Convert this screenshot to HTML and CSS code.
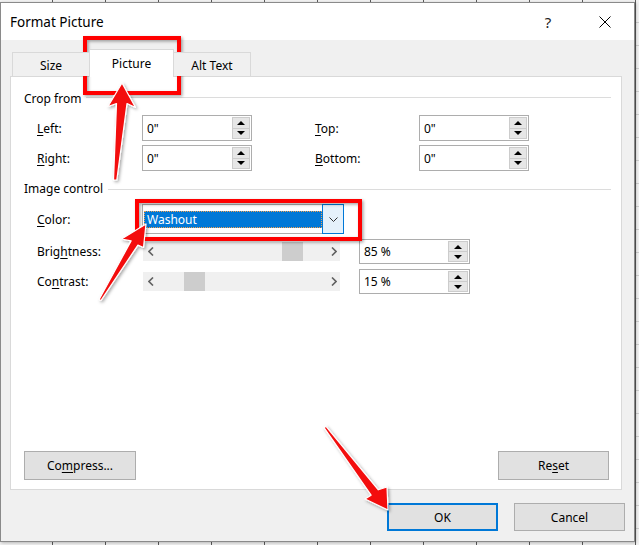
FILE: index.html
```html
<!DOCTYPE html>
<html lang="en">

<head>
    <meta charset="UTF-8">
    <meta name="viewport" content="width=device-width, initial-scale=1.0">
    <title>Format Picture</title>
    <link rel="stylesheet" href="styles.css">
</head>

<body>
    <div class="dialog">
        <div class="titlebar">
            <span class="title">Format Picture</span>
            <span class="help">?</span>
            <span class="close">
                <svg width="12" height="12" viewBox="0 0 12 12"><path d="M0.5 0.5 L11.5 11.5 M11.5 0.5 L0.5 11.5" stroke="#000" stroke-width="1" fill="none" /></svg>
            </span>
        </div>

        <div class="dialog-body">
            <div class="tabs">
                <div class="tab tab-size">Size</div>
                <div class="tab tab-picture active">Picture</div>
                <div class="tab tab-alt">Alt Text</div>
            </div>

            <div class="panel">
                <div class="group-head"><span>Crop from</span></div>
                <div class="crop-grid">
                    <label><u>L</u>eft:</label>
                    <div class="spin-field">
                        <span class="value">0"</span>
                        <span class="spin"><span><i class="up"></i></span><span><i class="down"></i></span></span>
                    </div>
                    <span></span>
                    <label><u>T</u>op:</label>
                    <div class="spin-field">
                        <span class="value">0"</span>
                        <span class="spin"><span><i class="up"></i></span><span><i class="down"></i></span></span>
                    </div>

                    <label><u>R</u>ight:</label>
                    <div class="spin-field">
                        <span class="value">0"</span>
                        <span class="spin"><span><i class="up"></i></span><span><i class="down"></i></span></span>
                    </div>
                    <span></span>
                    <label><u>B</u>ottom:</label>
                    <div class="spin-field">
                        <span class="value">0"</span>
                        <span class="spin"><span><i class="up"></i></span><span><i class="down"></i></span></span>
                    </div>
                </div>

                <div class="group-head image-head"><span>Image control</span></div>
                <div class="ctrl-grid">
                    <label><u>C</u>olor:</label>
                    <div class="combo">
                        <span class="combo-value">Washout</span>
                        <span class="combo-btn">
                            <svg width="9" height="5" viewBox="0 0 9 5"><path d="M0.5 0.5 L4.5 4.5 L8.5 0.5" stroke="#333" stroke-width="1" fill="none" /></svg>
                        </span>
                    </div>

                    <label>Brig<u>h</u>tness:</label>
                    <div class="slider">
                        <svg width="6" height="9" viewBox="0 0 6 9"><path d="M5 0.5 L1 4.5 L5 8.5" stroke="#606060" stroke-width="1.6" fill="none" /></svg>
                        <svg width="6" height="9" viewBox="0 0 6 9"><path d="M1 0.5 L5 4.5 L1 8.5" stroke="#606060" stroke-width="1.6" fill="none" /></svg>
                        <span class="thumb" style="left: 139px"></span>
                    </div>
                    <span></span>
                    <div class="spin-field wide">
                        <span class="value">85 %</span>
                        <span class="spin"><span><i class="up"></i></span><span><i class="down"></i></span></span>
                    </div>

                    <label>Co<u>n</u>trast:</label>
                    <div class="slider">
                        <svg width="6" height="9" viewBox="0 0 6 9"><path d="M5 0.5 L1 4.5 L5 8.5" stroke="#606060" stroke-width="1.6" fill="none" /></svg>
                        <svg width="6" height="9" viewBox="0 0 6 9"><path d="M1 0.5 L5 4.5 L1 8.5" stroke="#606060" stroke-width="1.6" fill="none" /></svg>
                        <span class="thumb" style="left: 41px"></span>
                    </div>
                    <span></span>
                    <div class="spin-field wide">
                        <span class="value">15 %</span>
                        <span class="spin"><span><i class="up"></i></span><span><i class="down"></i></span></span>
                    </div>
                </div>

                <div class="panel-buttons">
                    <button type="button" class="btn-compress">Co<u>m</u>press...</button>
                    <button type="button" class="btn-reset">Re<u>s</u>et</button>
                </div>
            </div>

            <div class="footer">
                <button type="button" class="btn-ok">OK</button>
                <button type="button">Cancel</button>
            </div>
        </div>
    </div>

    <!-- annotation layer drawn over the dialog -->
    <svg class="marks" width="639" height="545" viewBox="0 0 639 545">
        <defs>
            <filter id="shadow" x="-20%" y="-20%" width="140%" height="140%">
                <feDropShadow dx="1.5" dy="1.5" stdDeviation="1.5" flood-color="#000" flood-opacity="0.35" />
            </filter>
        </defs>
        <g filter="url(#shadow)">
            <rect x="85" y="38" width="94" height="55" fill="none" stroke="#f00" stroke-width="4" />
            <rect x="137" y="201" width="223" height="38" fill="none" stroke="#f00" stroke-width="4" />
            <polygon points="122,83 135.5,107.5 127,103.5 116.8,180 113.5,180 116.5,103.5 108,106.5" fill="#f31010" stroke="#fff" stroke-width="1.2" stroke-linejoin="round" />
            <polygon points="146,224 143.5,247.5 137.9,245.1 100.9,300.5 99.1,299.5 131.1,240.9 121.5,239" fill="#f31010" stroke="#fff" stroke-width="1.2" stroke-linejoin="round" />
            <polygon points="388,510 365,499 371.1,495.2 324,427.7 326,426.3 378.3,489.8 387,487" fill="#f31010" stroke="#fff" stroke-width="1.2" stroke-linejoin="round" />
        </g>
    </svg>
</body>

</html>
```

FILE: styles.css
```css
body {
    margin: 0;
    width: 639px;
    height: 545px;
    overflow: hidden;
    position: relative;
    font-family: "Noto Sans", "Open Sans", sans-serif;
    font-size: 12px;
    color: #000;
    background-color: #f2f2f2;
    background-image:
        repeating-linear-gradient(to right, transparent 0 52px, #5a5a5a 52px 53px),
        repeating-linear-gradient(to bottom, transparent 0 22px, #d0d0d0 22px 23px);
}

.dialog {
    margin-top: 2px;
    width: 635px;
    height: 540px;
    box-sizing: border-box;
    border: 1px solid #8a8a8a;
    background-color: #f0f0f0;
    display: flex;
    flex-direction: column;
    box-shadow: 1px 1px 3px rgba(0, 0, 0, 0.25);
}

.titlebar {
    height: 37px;
    flex: none;
    background-color: #fff;
    display: flex;
    align-items: center;
    padding-left: 9px;
    padding-right: 22px;
}

.title {
    flex: 1;
    font-size: 13.5px;
}

.help {
    width: 14px;
    text-align: center;
    font-size: 15px;
    color: #222;
}

.close {
    margin-left: 42px;
    width: 15px;
    display: flex;
    justify-content: center;
}

.dialog-body {
    flex: 1;
    display: flex;
    flex-direction: column;
    padding: 9px 10px 10px 9px;
}

/* tabs */
.tabs {
    display: flex;
    align-items: flex-start;
    height: 28px;
    margin-bottom: -1px;
    padding-left: 2px;
    position: relative;
    z-index: 1;
}

.tab {
    margin-top: 3px;
    height: 24px;
    box-sizing: border-box;
    border: 1px solid #d9d9d9;
    border-bottom: none;
    background-color: #f0f0f0;
    display: flex;
    align-items: center;
    justify-content: center;
    padding-top: 1px;
}

.tab-size {
    width: 78px;
}

.tab-picture {
    width: 85px;
    margin-left: -1px;
}

.tab-alt {
    width: 78px;
    margin-left: -1px;
}

.tab.active {
    margin-top: 0;
    height: 28px;
    background-color: #fff;
    position: relative;
    z-index: 2;
    padding-top: 0;
}

/* panel */
.panel {
    width: 612px;
    height: 414px;
    box-sizing: border-box;
    border: 1px solid #d9d9d9;
    background-color: #fff;
    padding: 0 10px 9px 13px;
    display: flex;
    flex-direction: column;
}

.group-head {
    margin-top: 14px;
    height: 16px;
    line-height: 16px;
    display: flex;
}

.group-head::after {
    content: "";
    flex: 1;
    height: 0;
    border-top: 1px solid #dcdcdc;
    margin: 6px 0 0 5px;
}

.image-head {
    margin-top: 10px;
}

.image-head::after {
    margin-top: 8px;
}

label {
    white-space: nowrap;
}

u {
    text-underline-offset: 2px;
}

.crop-grid {
    margin-top: 8px;
    padding-left: 13px;
    display: grid;
    grid-template-columns: 105px 110px 63px 104px 110px;
    grid-auto-rows: 26px;
    row-gap: 4px;
    align-items: center;
}

.spin-field {
    height: 100%;
    box-sizing: border-box;
    border: 1px solid #adadad;
    background-color: #fff;
    display: flex;
    align-items: center;
    padding: 1px 1px 1px 4px;
}

.spin-field .value {
    flex: 1;
}

.spin {
    display: flex;
    flex-direction: column;
    width: 18px;
    height: 100%;
}

.spin-field.wide .spin {
    width: 20px;
}

.spin span {
    flex: 1;
    background-color: #e6e6e6;
    border: 1px solid #cccccc;
    display: flex;
    align-items: center;
    justify-content: center;
}

.spin span + span {
    border-top: none;
}

.spin .up {
    width: 0;
    height: 0;
    border-left: 4px solid transparent;
    border-right: 4px solid transparent;
    border-bottom: 4px solid #000;
}

.spin .down {
    width: 0;
    height: 0;
    border-left: 4px solid transparent;
    border-right: 4px solid transparent;
    border-top: 4px solid #000;
}

.ctrl-grid {
    margin-top: 7px;
    padding-left: 13px;
    display: grid;
    grid-template-columns: 105px 198px 19px 111px;
    grid-template-rows: 30px 25px 25px;
    row-gap: 5px;
    align-items: center;
}

.combo {
    grid-column: 2 / span 3;
    width: 202px;
    height: 30px;
    box-sizing: border-box;
    border: 1px solid #adadad;
    background-color: #fff;
    display: flex;
    align-items: flex-start;
}

.combo-value {
    flex: 1;
    margin: 6px 0 0 1px;
    height: 17px;
    box-sizing: border-box;
    background-color: #0078d7;
    color: #fff;
    border: 1px dotted #f0a050;
    padding-left: 2px;
    line-height: 15px;
}

.combo-btn {
    width: 22px;
    height: 30px;
    margin: -1px -1px 0 0;
    box-sizing: border-box;
    border: 1px solid #0078d7;
    background-color: #e5f1fb;
    display: flex;
    align-items: center;
    justify-content: center;
}

.slider {
    margin-left: 1px;
    height: 19px;
    background-color: #f0f0f0;
    position: relative;
    display: flex;
    align-items: center;
    justify-content: space-between;
    padding: 0 3px 0 5px;
}

.slider .thumb {
    position: absolute;
    top: 0;
    width: 21px;
    height: 100%;
    background-color: #cdcdcd;
}

/* buttons */
button {
    font: inherit;
    color: #000;
    background-color: #e1e1e1;
    border: 1px solid #adadad;
    padding: 0;
    height: 29px;
}

.panel-buttons {
    margin-top: auto;
    display: flex;
    justify-content: space-between;
}

.btn-compress {
    width: 112px;
}

.btn-reset {
    width: 111px;
    margin-right: 2px;
}

.footer {
    margin-top: 13px;
    margin-right: -1px;
    display: flex;
    justify-content: flex-end;
    gap: 16px;
}

.footer button {
    width: 111px;
    height: 28px;
}

.footer .btn-ok {
    border: 2px solid #0078d7;
}

.marks {
    position: absolute;
    top: 0;
    left: 0;
    pointer-events: none;
}
```
